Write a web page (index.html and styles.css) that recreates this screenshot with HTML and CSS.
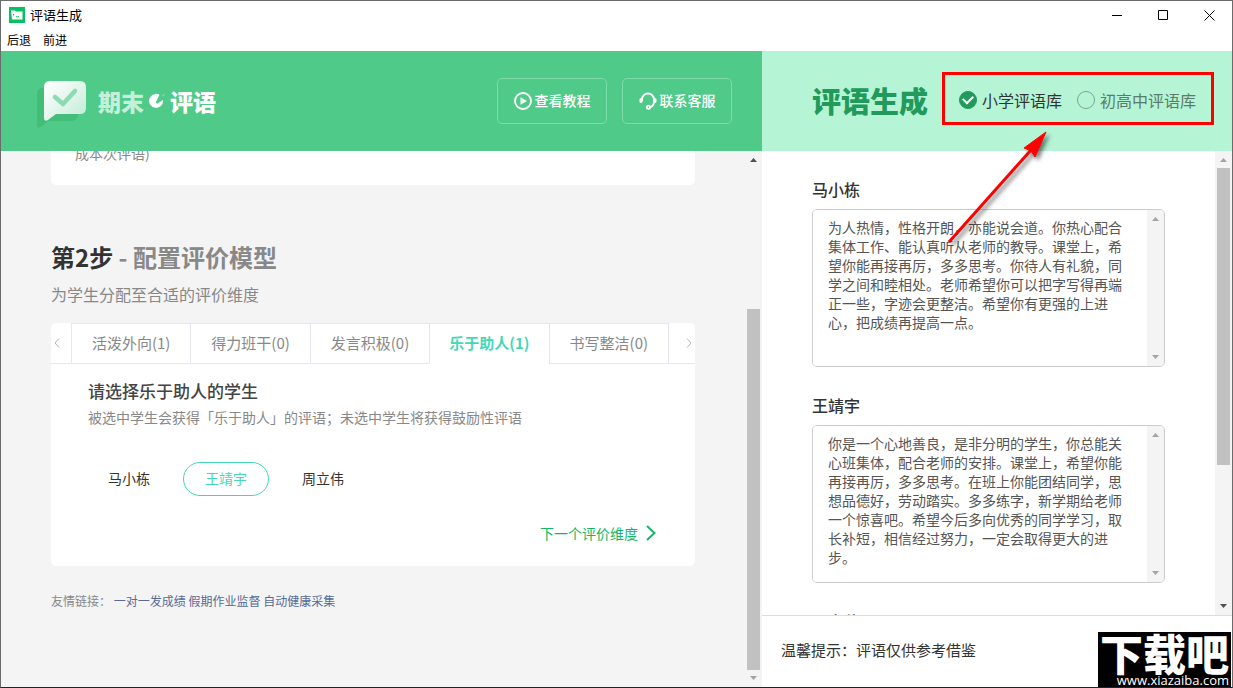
FILE: index.html
```html
<!DOCTYPE html>
<html lang="zh-CN">
<head>
<meta charset="utf-8">
<title>评语生成</title>
<link rel="stylesheet" href="styles.css">
</head>
<body>
<div class="window">
  <header class="titlebar">
    <svg class="app-icon" viewBox="0 0 16 16" width="16" height="16"><rect width="16" height="16" fill="#07c160"/><path d="M2 3.500h4l1 1h6.500v8H3z" fill="#fff"/><path d="M4.500 7v1.500M7 9.500q1.500 1 3 0" stroke="#07c160" fill="none"/></svg>
    <span class="app-title">评语生成</span>
    <div class="window-controls">
      <button type="button" aria-label="最小化"><svg width="10" height="11" viewBox="0 0 10 11"><path d="M0 5.500h10"/></svg></button>
      <button type="button" aria-label="最大化"><svg width="11" height="11" viewBox="0 0 11 11"><path d="M.5.5h9v9h-9z"/></svg></button>
      <button type="button" aria-label="关闭"><svg width="11" height="11" viewBox="0 0 11 11"><path d="M.5.5l10 10M10.500.5l-10 10"/></svg></button>
    </div>
  </header>
  <nav class="menubar">
    <button type="button">后退</button>
    <button type="button">前进</button>
  </nav>
  <div class="panes">
    <main class="left">
      <header class="brandbar">
        <div class="brand">
          <svg class="brand-mark" viewBox="0 0 52 50" width="52" height="50">
            <defs><linearGradient id="bubble" x1="0" y1="0" x2="1" y2="1"><stop offset="0" stop-color="#fff"/><stop offset=".3" stop-color="#f0faf5"/><stop offset="1" stop-color="#bfebd4"/></linearGradient></defs>
            <path d="M7 9h28q7 0 7 6v20q0 7-7 7H12l-6 5q-5 3-5 0V15q0-6 6-6z" fill="#42bd7a"/>
            <path d="M14 2h30q6 0 6 6v21q0 6-6 6H20l-8 6q-4 2-4-2V8q0-6 6-6z" fill="url(#bubble)"/>
            <path d="M19 18l8 7 12-13" stroke="#8edab2" stroke-width="4.500" fill="none" stroke-linecap="round" stroke-linejoin="round"/>
          </svg>
          <span class="brand-name"><span class="brand-soft">期末</span><svg width="18" height="18" viewBox="0 0 18 18"><path d="M11.500 2.800A7 7 0 1 0 15 8L9.500 11.500Q8 12 7.800 10.300z" fill="#fff"/><path d="M14.500 4l2-2" stroke="#a5e4c2"/></svg><span>评语</span></span>
        </div>
        <div class="brand-actions">
          <button class="ghost" type="button">
            <svg width="18" height="18" viewBox="0 0 18 18"><circle cx="9" cy="9" r="8" fill="none" stroke="#fff" stroke-width="1.800"/><path d="M6.500 5.200v7.600L13 9z" fill="#fff"/></svg>
            <span>查看教程</span>
          </button>
          <button class="ghost" type="button">
            <svg width="18" height="18" viewBox="0 0 18 18" fill="none" stroke="#fff"><path d="M3 9V7.500a6 6 0 0 1 12 0V9q0 5-4 6.500" stroke-width="1.800"/><path d="M2 7.500v2M16 7.500v2" stroke-width="3" stroke-linecap="round"/><circle cx="9.500" cy="15.200" r="1.600" stroke-width="1.800"/></svg>
            <span>联系客服</span>
          </button>
        </div>
      </header>
      <div class="scroll-area">
        <div class="content">
          <section class="card previous"><p>成本次评语)</p></section>
          <h2>第2步 <span>- 配置评价模型</span></h2>
          <p class="lead">为学生分配至合适的评价维度</p>
          <section class="card model">
            <div class="tabs">
              <button class="tab-arrow prev" type="button" aria-label="上一页"><svg width="6" height="10" viewBox="0 0 6 10"><path d="M5 .5L1 5l4 4.500"/></svg></button>
              <div class="tab-list" role="tablist">
                <button role="tab" type="button">活泼外向(1)</button>
                <button role="tab" type="button">得力班干(0)</button>
                <button role="tab" type="button">发言积极(0)</button>
                <button role="tab" type="button" aria-selected="true">乐于助人(1)</button>
                <button role="tab" type="button">书写整洁(0)</button>
              </div>
              <button class="tab-arrow next" type="button" aria-label="下一页"><svg width="6" height="10" viewBox="0 0 6 10"><path d="M1 .5L5 5 1 9.500"/></svg></button>
            </div>
            <div class="panel">
              <h3>请选择乐于助人的学生</h3>
              <p>被选中学生会获得「乐于助人」的评语；未选中学生将获得鼓励性评语</p>
              <div class="students">
                <button type="button">马小栋</button>
                <button type="button" class="chosen">王靖宇</button>
                <button type="button">周立伟</button>
              </div>
              <button class="next-step" type="button">下一个评价维度 <svg width="10" height="16" viewBox="0 0 10 16"><path d="M1 1l7.500 7L1 15"/></svg></button>
            </div>
          </section>
          <footer class="links"><span>友情链接：</span> <a href="#">一对一发成绩</a> <a href="#">假期作业监督</a> <a href="#">自动健康采集</a></footer>
        </div>
        <div class="scrollbar main-bar">
          <svg width="7" height="4" viewBox="0 0 7 4"><path d="M3.500 0L7 4H0z" fill="#505050"/></svg>
          <div class="track"><i class="thumb"></i></div>
          <svg width="7" height="4" viewBox="0 0 7 4"><path d="M0 0h7L3.500 4z" fill="#a3a3a3"/></svg>
        </div>
      </div>
    </main>
    <aside class="right">
      <header class="result-head">
        <h1>评语生成</h1>
        <div class="library">
          <label><input type="radio" name="library" checked>小学评语库</label>
          <label class="muted"><input type="radio" name="library">初高中评语库</label>
        </div>
      </header>
      <div class="scroll-area">
        <div class="comments">
          <div class="comment">
            <label for="c1">马小栋</label>
            <div class="box">
              <textarea id="c1">为人热情，性格开朗，亦能说会道。你热心配合集体工作、能认真听从老师的教导。课堂上，希望你能再接再厉，多多思考。你待人有礼貌，同学之间和睦相处。老师希望你可以把字写得再端正一些，字迹会更整洁。希望你有更强的上进心，把成绩再提高一点。</textarea>
              <div class="scrollbar"><svg width="7" height="4" viewBox="0 0 7 4"><path d="M3.500 0L7 4H0z" fill="#a3a3a3"/></svg><svg width="7" height="4" viewBox="0 0 7 4"><path d="M0 0h7L3.500 4z" fill="#a3a3a3"/></svg></div>
            </div>
          </div>
          <div class="comment">
            <label for="c2">王靖宇</label>
            <div class="box">
              <textarea id="c2">你是一个心地善良，是非分明的学生，你总能关心班集体，配合老师的安排。课堂上，希望你能再接再厉，多多思考。在班上你能团结同学，思想品德好，劳动踏实。多多练字，新学期给老师一个惊喜吧。希望今后多向优秀的同学学习，取长补短，相信经过努力，一定会取得更大的进步。</textarea>
              <div class="scrollbar"><svg width="7" height="4" viewBox="0 0 7 4"><path d="M3.500 0L7 4H0z" fill="#a3a3a3"/></svg><svg width="7" height="4" viewBox="0 0 7 4"><path d="M0 0h7L3.500 4z" fill="#a3a3a3"/></svg></div>
            </div>
          </div>
          <div class="comment"><label>周立伟</label></div>
        </div>
        <div class="scrollbar result-bar">
          <svg width="7" height="4" viewBox="0 0 7 4"><path d="M3.500 0L7 4H0z" fill="#a3a3a3"/></svg>
          <div class="track"><i class="thumb"></i></div>
          <svg width="7" height="4" viewBox="0 0 7 4"><path d="M0 0h7L3.500 4z" fill="#505050"/></svg>
        </div>
      </div>
      <footer class="tip">温馨提示：评语仅供参考借鉴</footer>
      <div class="highlight"></div>
      <svg class="pointer" width="120" height="130" viewBox="0 0 120 130">
        <path d="M8 114L90 22" stroke="#f00" stroke-width="3"/>
        <path d="M105 4L83 20l7 3 4 6z" fill="#f00" stroke="#f00" stroke-width="1"/>
      </svg>
    </aside>
  </div>
  <div class="watermark">
    <strong>下载吧</strong>
    <small>www.xiazaiba.com</small>
  </div>
</div>
</body>
</html>
```
FILE: styles.css
```css
* { box-sizing: border-box; }
body, h1, h2, h3, p { margin: 0; }
body { font-family: "Noto Sans CJK SC", sans-serif; font-size: 14px; line-height: 20px; color: #333; }
button { font: inherit; color: inherit; background: none; border: 0; padding: 0; cursor: pointer; }
svg { flex: none; display: block; }

.window { position: relative; display: flex; flex-direction: column; height: 100vh; border: 1px solid #6b6b6b; border-bottom-color: #222; background: #fff; overflow: hidden; }

.titlebar { display: flex; align-items: center; flex: none; height: 28px; padding-left: 8px; }
.app-title { margin-left: 5px; font-size: 13px; color: #000; }
.window-controls { display: flex; margin-left: auto; }
.window-controls button { display: grid; place-items: center; width: 46px; height: 28px; }
.window-controls path { stroke: #000; fill: none; }
.menubar { display: flex; flex: none; gap: 12px; height: 22px; padding-left: 6px; font-size: 12px; color: #000; }

.panes { display: flex; flex: 1; min-height: 0; }
.left { display: flex; flex-direction: column; flex: 1; min-width: 0; background: #f4f4f4; }
.right { position: relative; display: flex; flex-direction: column; flex: none; width: 470px; background: #fff; }
.scroll-area { display: flex; flex: 1; min-height: 0; overflow: hidden; }

.brandbar { display: flex; align-items: center; justify-content: space-between; flex: none; height: 100px; padding: 0 30px 0 35px; background: #4fca88; }
.brand { display: flex; align-items: center; gap: 10px; }
.brand-mark { margin-top: 6px; }
.brand-name { display: flex; align-items: center; gap: 4px; font-size: 23px; font-weight: 900; line-height: 32px; color: #fff; }
.brand-soft { color: #c5efd8; }
.brand-actions { display: flex; gap: 15px; }
.ghost { display: flex; align-items: center; justify-content: center; gap: 3px; width: 110px; height: 46px; border: 1px solid #7fdba9; border-radius: 5px; color: #fff; font-weight: 500; }
.ghost span { padding-bottom: 2px; }

.content { flex: 1; min-width: 0; padding: 0 50px; }
.card { background: #fff; border-radius: 5px; }
.previous { margin-top: -24px; padding: 16px 24px 22px; color: #888; }
h2 { margin-top: 56px; font-size: 24px; line-height: 32px; }
h2 span, .lead { color: #888; }
.lead { margin-top: 9px; font-size: 16px; line-height: 24px; }
.model { margin-top: 17px; overflow: hidden; }

.tabs { display: flex; height: 41px; }
.tab-list { display: grid; grid-template-columns: repeat(5, 1fr); flex: 1; border-top: 1px solid #e4e7ed; }
.tab-list button { padding-bottom: 2px; border: solid #e4e7ed; border-width: 0 0 1px 1px; font-size: 15px; color: #888; }
.tab-list button[aria-selected="true"] { border-bottom-color: transparent; font-weight: 700; color: #44d7b6; }
.tab-arrow { display: flex; align-items: center; border-bottom: 1px solid #e4e7ed; }
.tab-arrow path { fill: none; stroke: #b4b4b4; }
.prev { width: 20px; padding-left: 3px; }
.next { width: 27px; justify-content: flex-end; padding-right: 3px; border-left: 1px solid #e4e7ed; }

.panel { display: flex; flex-direction: column; padding: 15px 37px 23px; }
h3 { font-size: 17px; font-weight: 500; line-height: 24px; color: #444; }
.panel p { margin-top: 4px; color: #888; }
.students { display: flex; gap: 11px; margin: 35px 0 27px -2px; }
.students button { height: 34px; padding: 0 21px 2px; border: 1px solid transparent; border-radius: 17px; }
.students .chosen { border-color: #44d7b6; color: #44d7b6; }
.next-step { display: flex; align-items: center; align-self: flex-end; gap: 8px; margin-right: 2px; color: #13b765; }
.next-step path { fill: none; stroke: #13b765; stroke-width: 2; }
.links { margin-top: 25px; font-size: 12px; color: #888; }
.links a { color: #576b95; text-decoration: none; }

.scrollbar { display: flex; flex-direction: column; align-items: center; justify-content: space-between; flex: none; width: 17px; padding: 7px 0; background: #f4f4f4; }
.track { display: flex; flex-direction: column; flex: 1; align-self: stretch; margin: 6px 2px; }
.thumb { background: #c1c1c1; }
.main-bar .track { justify-content: flex-end; }
.main-bar .thumb { height: 72%; }
.result-bar .thumb { height: 69%; }

.result-head { display: flex; align-items: center; flex: none; height: 100px; padding: 0 0 2px 50px; background: #b5f5d5; }
h1 { font-size: 29px; font-weight: 900; line-height: 40px; color: #219a5c; }
.library { display: flex; gap: 15px; margin-left: 31px; font-size: 16px; }
.library label { display: flex; align-items: center; gap: 5px; }
.library .muted { color: #5b7b6b; }
.library input { appearance: none; display: grid; place-items: center; width: 18px; height: 18px; margin: 0; border: 1px solid #7aa58f; border-radius: 50%; }
.library input:checked { border-color: #219a5c; background: #219a5c; }
.library input:checked::after { content: ""; width: 8px; height: 5px; margin-bottom: 3px; border: solid #fff; border-width: 0 0 2px 2px; rotate: -45deg; }

.comments { flex: 1; padding: 26px 50px 0; }
.comment { margin-bottom: 26px; }
.comment label { display: block; margin-bottom: 8px; font-size: 16px; font-weight: 500; line-height: 24px; }
.box { display: flex; height: 158px; border: 1px solid #ccc; border-radius: 5px; overflow: hidden; }
.box textarea { flex: 1; min-width: 0; padding: 8px 15px; border: 0; outline: 0; resize: none; overflow: hidden; font: inherit; line-height: 19px; color: #555; }
.tip { flex: none; height: 72px; padding: 24px 19px; border-top: 1px solid #ddd; font-size: 15px; }

.highlight { position: absolute; left: 180px; top: 21px; width: 272px; height: 53px; border: 3px solid #f00; pointer-events: none; }
.pointer { position: absolute; left: 179px; top: 77px; pointer-events: none; filter: drop-shadow(3px 3px 2px rgba(0, 0, 0, .5)); }

.watermark { position: absolute; right: 1px; bottom: -1px; display: flex; flex-direction: column; align-items: center; width: 133px; height: 56px; background: #000; color: #fff; overflow: hidden; }
.watermark strong { flex: none; font-size: 43px; font-weight: 900; line-height: 40px; }
.watermark small { flex: none; align-self: flex-end; padding-right: 2px; font-family: "Open Sans", sans-serif; font-size: 13px; line-height: 16px; }
```
